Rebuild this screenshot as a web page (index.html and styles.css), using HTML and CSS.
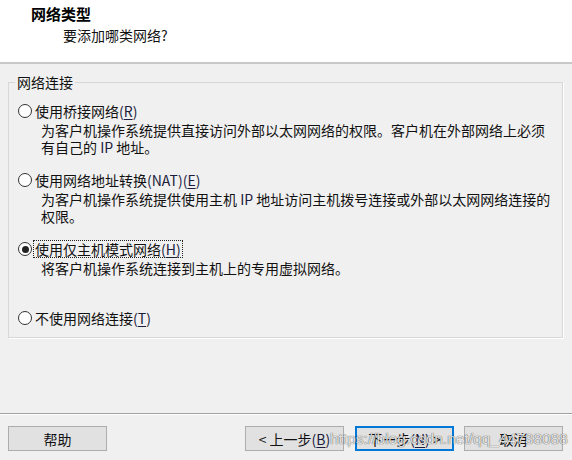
FILE: index.html
```html
<!DOCTYPE html>
<html lang="zh-CN">
<head>
<meta charset="utf-8">
<title>网络类型</title>
<link rel="stylesheet" href="styles.css">
</head>
<body>
<div class="dialog">
  <header class="head">
    <div class="title">网络类型</div>
    <div class="subtitle">要添加哪类网络?</div>
  </header>
  <main class="content">
    <fieldset class="group">
      <legend class="group-label">网络连接</legend>
      <div class="option">
        <div class="choice"><span class="radio"></span><span class="choice-text">使用桥接网络<span class="lat">(<u>R</u>)</span></span></div>
        <p class="desc">为客户机操作系统提供直接访问外部以太网网络的权限。客户机在外部网络上必须<br>有自己的 <span class="lat">IP</span> 地址。</p>
      </div>
      <div class="option">
        <div class="choice"><span class="radio"></span><span class="choice-text">使用网络地址转换<span class="lat">(NAT)(<u>E</u>)</span></span></div>
        <p class="desc">为客户机操作系统提供使用主机 <span class="lat">IP</span> 地址访问主机拨号连接或外部以太网网络连接的<br>权限。</p>
      </div>
      <div class="option">
        <div class="choice"><span class="radio checked"></span><span class="choice-text focused">使用仅主机模式网络<span class="lat">(<u>H</u>)</span></span></div>
        <p class="desc">将客户机操作系统连接到主机上的专用虚拟网络。</p>
      </div>
      <div class="option last">
        <div class="choice"><span class="radio"></span><span class="choice-text">不使用网络连接<span class="lat">(<u>T</u>)</span></span></div>
      </div>
    </fieldset>
  </main>
  <footer class="foot">
    <button class="btn">帮助</button>
    <div class="spacer"></div>
    <button class="btn">&lt; 上一步<span class="lat">(<u>B</u>)</span></button>
    <button class="btn default">下一步<span class="lat">(<u>N</u>)</span> &gt;</button>
    <button class="btn">取消</button>
  </footer>
  <div class="watermark">https://blog.csdn.net/qq_44738088</div>
</div>
</body>
</html>
```
FILE: styles.css
```css
* { box-sizing: border-box; }
html, body { margin: 0; padding: 0; }
body {
  background: #f0f0f0;
  font-family: "Noto Sans CJK SC", "Noto Sans", sans-serif;
  font-size: 14px;
  color: #111;
}
.dialog {
  position: relative;
  width: 572px;
  height: 460px;
  display: flex;
  flex-direction: column;
  overflow: hidden;
}
.head {
  height: 64px;
  background: #fff;
  border-bottom: 2px solid #c8c8c8;
  padding-top: 5px;
}
.title {
  margin-left: 31px;
  font-size: 15px;
  font-weight: bold;
  line-height: 18px;
  color: #000;
}
.subtitle {
  margin-left: 63px;
  margin-top: 3px;
  line-height: 18px;
}
.content {
  flex: 1;
  padding-top: 10px;
}
.group {
  margin: 0 9px 0 8px;
  padding: 13px 9px 11px 9px;
  border: 1px solid #d8d8d8;
  box-shadow: 1px 1px 0 #fff;
  min-width: 0;
}
.group-label {
  padding: 0 2px;
  margin-left: -3px;
  line-height: 16px;
}
.option { margin-bottom: 16px; }
.option.last { margin-bottom: 0; }
.choice {
  display: flex;
  align-items: center;
  height: 16px;
  line-height: 16px;
}
.radio {
  width: 14px;
  height: 14px;
  border: 1px solid #333;
  border-radius: 50%;
  background: #fff;
  margin-right: 3px;
  flex: none;
  position: relative;
}
.radio.checked::after {
  content: "";
  position: absolute;
  left: 2.5px;
  top: 2.5px;
  width: 7px;
  height: 7px;
  border-radius: 50%;
  background: #222;
}
.choice-text { white-space: nowrap; }
.choice-text.focused {
  outline: 1px dotted #222;
  padding: 0 1px;
  margin-left: -1px;
}
.lat { color: #1c1c3c; }
u { text-underline-offset: 2px; }
.desc {
  margin: 3px 0 0 23px;
  line-height: 17px;
  min-height: 34px;
  white-space: nowrap;
}
.foot {
  height: 47px;
  border-top: 1px solid #a0a0a0;
  box-shadow: inset 0 1px 0 #fff;
  display: flex;
  align-items: flex-start;
  padding: 12px 9px 0 8px;
  gap: 11px;
}
.spacer { flex: 1; }
.btn {
  width: 99px;
  height: 25px;
  background: #e1e1e1;
  border: 1px solid #adadad;
  font-family: inherit;
  font-size: 14px;
  line-height: 16px;
  color: #111;
  padding: 0;
}
.btn:last-child { margin-left: -1px; }
.btn.default {
  border-color: #0078d7;
  box-shadow: inset 0 0 0 1px #0078d7;
}
.watermark {
  position: absolute;
  left: 330px;
  top: 430px;
  font-family: "Liberation Sans", sans-serif;
  font-size: 15.5px;
  line-height: 17px;
  color: rgba(255, 255, 255, 0.85);
  text-shadow: 0 0 1px rgba(0, 0, 0, 0.6), 0 0 1px rgba(0, 0, 0, 0.4);
  white-space: nowrap;
  pointer-events: none;
}
```
